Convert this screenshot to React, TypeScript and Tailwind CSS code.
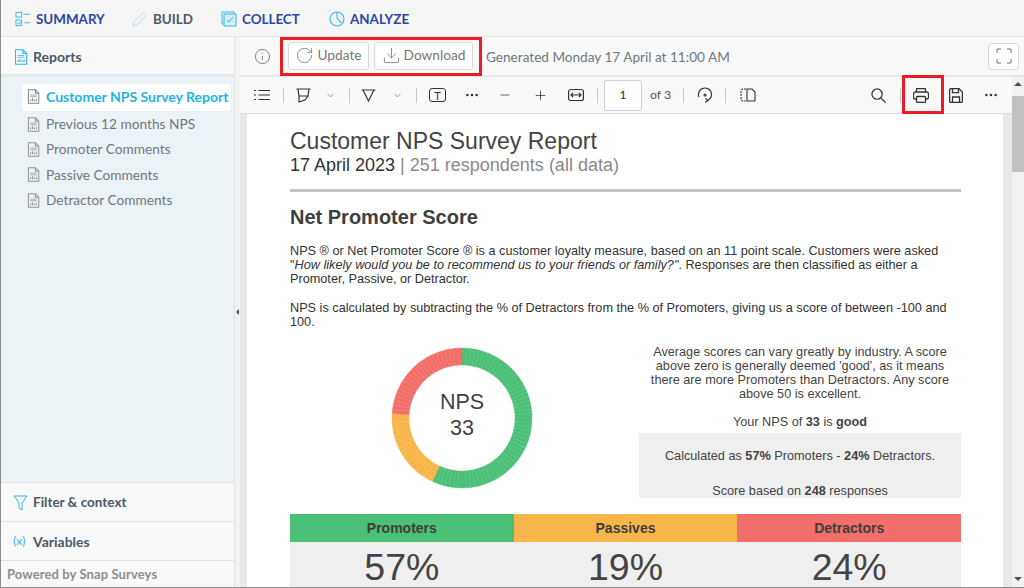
import { ReactNode } from 'react';
import { ChevronDown, Download, Info, Minus, MoreHorizontal, Plus, RotateCw } from 'lucide-react';

const ui = "font-['Lato','Noto_Sans',sans-serif]";
const doc = "font-['Liberation_Sans',Arial,sans-serif]";

function ReportIcon({ className }: { className: string }) {
  return (
    <svg viewBox="0 0 14 16" className={className} fill="none" stroke="currentColor" strokeWidth="1.1">
      <path d="M1.5.8h7.5l3.7 3.7v10.7H1.500z" />
      <path d="M9 .8v3.700h3.700" />
      <path d="M3.500 6.500h7M3.500 8.300h7" strokeWidth="0.8" />
      <path d="M4 13v-2M6 13v-3M8 13v-1.500M10 13v-2.500" strokeWidth="1.200" />
    </svg>
  );
}

function NavItem({ icon, label, dark, className }: { icon: ReactNode; label: string; dark?: boolean; className: string }) {
  return (
    <div className={`flex items-center gap-[5px] ${className}`}>
      {icon}
      <span className={`text-[13.4px] font-bold ${dark ? 'text-[#4b5a68]' : 'text-[#2b47a8]'}`}>{label}</span>
    </div>
  );
}

function ToolSep({ className = '' }: { className?: string }) {
  return <div className={`w-px h-[15px] bg-[#c8c8c8] ${className}`} />;
}

function Donut() {
  const cx = 72;
  const cy = 72;
  const r1 = 70;
  const r2 = 53;
  const segments = [];
  for (let i = 0; i < 100; i++) {
    const a = (i * 3.6 * Math.PI) / 180;
    const b = ((i + 1) * 3.6 * Math.PI) / 180;
    const color = i < 57 ? '#4bc076' : i < 76 ? '#f7b54a' : '#f26e68';
    const d = [
      `M${cx + r1 * Math.sin(a)} ${cy - r1 * Math.cos(a)}`,
      `L${cx + r1 * Math.sin(b)} ${cy - r1 * Math.cos(b)}`,
      `L${cx + r2 * Math.sin(b)} ${cy - r2 * Math.cos(b)}`,
      `L${cx + r2 * Math.sin(a)} ${cy - r2 * Math.cos(a)}`,
      'Z',
    ].join(' ');
    segments.push(
      <g key={i}>
        <path d={d} fill={color} stroke={color} strokeWidth="0.4" />
        <path
          d={`M${cx + r1 * Math.sin(a)} ${cy - r1 * Math.cos(a)}L${cx + r2 * Math.sin(a)} ${cy - r2 * Math.cos(a)}`}
          stroke="#ffffff"
          strokeOpacity="0.1"
          strokeWidth="0.5"
        />
      </g>,
    );
  }
  return (
    <div className="relative w-[144px] h-[144px]">
      <svg viewBox="0 0 144 144" className="w-[144px] h-[144px]">
        {segments}
      </svg>
      <div className="absolute inset-0 flex flex-col items-center justify-center pb-[7px] text-[21.5px] leading-[26px] text-[#3f4347]">
        <span>NPS</span>
        <span>33</span>
      </div>
    </div>
  );
}

function Report() {
  return (
    <div className={`${doc} w-[756px] h-full bg-white pl-[43px] pr-[42px] pt-[14px] text-[#444444] overflow-hidden`}>
      <h1 className="text-[23px] leading-[27px] text-[#444444]">Customer NPS Survey Report</h1>
      <p className="text-[18px] leading-[20px] text-[#333333]">
        17 April 2023 <span className="text-[#8a8a8a]">| 251 respondents (all data)</span>
      </p>
      <div className="h-[3px] bg-[#c4c4c4] mt-[14px]" />
      <h2 className="text-[20px] leading-[24px] font-bold mt-[13px] text-[#3f3f3f]">Net Promoter Score</h2>
      <p className="text-[12.7px] leading-[14px] mt-[15px] text-[#333333]">
        NPS ® or Net Promoter Score ® is a customer loyalty measure, based on an 11 point scale. Customers were asked
        "<i>How likely would you be to recommend us to your friends or family?"</i>. Responses are then classified as
        either a Promoter, Passive, or Detractor.
      </p>
      <p className="text-[12.7px] leading-[14px] mt-[15px] text-[#333333]">
        NPS is calculated by subtracting the % of Detractors from the % of Promoters, giving us a score of between -100
        and 100.
      </p>
      <div className="flex mt-[11px]">
        <div className="w-[349px] flex justify-center pr-[5px] pt-[6px]">
          <Donut />
        </div>
        <div className="w-[322px] text-center text-[12.7px] leading-[14px] text-[#444444] pt-[5px]">
          <p className="px-[10px]">
            Average scores can vary greatly by industry. A score above zero is generally deemed 'good', as it means
            there are more Promoters than Detractors. Any score above 50 is excellent.
          </p>
          <p className="mt-[14px]">
            Your NPS of <b>33</b> is <b>good</b>
          </p>
          <div className="bg-[#efefef] mt-[4px] h-[65px] pt-[16px]">
            <p>
              Calculated as <b>57%</b> Promoters - <b>24%</b> Detractors.
            </p>
            <p className="mt-[21px]">
              Score based on <b>248</b> responses
            </p>
          </div>
        </div>
      </div>
      <div className="mt-[16px]">
        <div className="grid grid-cols-3 h-[27px] text-[14px] leading-[28px] font-bold text-center text-[#3f3f3f]">
          <div className="bg-[#4bc076]">Promoters</div>
          <div className="bg-[#f7b54a]">Passives</div>
          <div className="bg-[#f26e68]">Detractors</div>
        </div>
        <div className="grid grid-cols-3 bg-[#efefef] text-center text-[37.5px] leading-[52px] h-[60px] text-[#444444]">
          <div>57%</div>
          <div>19%</div>
          <div>24%</div>
        </div>
      </div>
    </div>
  );
}

export default function App() {
  const items = ['Previous 12 months NPS', 'Promoter Comments', 'Passive Comments', 'Detractor Comments'];
  return (
    <div className={`${ui} relative w-[1024px] h-[588px] overflow-hidden bg-[#f5f5f5] border-l border-b border-[#8c8c8c] flex flex-col`}>
      {/* Top nav */}
      <div className="h-[37px] shrink-0 flex items-center pl-[14px] pt-[2px] border-b border-[#e6e6e6]">
        <NavItem
          className="w-[117px]"
          label="SUMMARY"
          icon={
            <svg viewBox="0 0 17 16" className="w-[16px] h-[16px] text-[#35b5e8]" fill="none" stroke="currentColor" strokeWidth="1">
              <path d="M1 1h6v5H1zM1 9h6v6H1zM9 3h7M10 12h6" />
              <path d="M2.500 12l1.500 1.500 2.500-3" />
            </svg>
          }
        />
        <NavItem
          dark
          className="w-[89px]"
          label="BUILD"
          icon={
            <svg viewBox="0 0 16 16" className="w-[16px] h-[16px] text-[#a8dff5]" fill="none" stroke="currentColor" strokeWidth="1">
              <path d="M1 15l1-4L11.500 1.500l3 3L5 14z" />
            </svg>
          }
        />
        <NavItem
          className="w-[108px]"
          label="COLLECT"
          icon={
            <svg viewBox="0 0 16 16" className="w-[16px] h-[16px] text-[#35b5e8]" fill="none" stroke="currentColor" strokeWidth="1">
              <path d="M3 13H1V1h12v2" />
              <path d="M3 3h12v12H3z" fill="#d5effa" />
              <path d="M6 9l2 2 4-5" />
            </svg>
          }
        />
        <NavItem
          className="w-[90px]"
          label="ANALYZE"
          icon={
            <svg viewBox="0 0 16 16" className="w-[16px] h-[16px] text-[#35b5e8]" fill="none" stroke="currentColor" strokeWidth="1.100">
              <circle cx="8" cy="8" r="7" />
              <path d="M8 1v6l4 5" />
            </svg>
          }
        />
      </div>

      <div className="flex flex-1 min-h-0">
        {/* Sidebar */}
        <aside className="w-[234px] shrink-0 flex flex-col border-r border-[#dfe3e6]">
          <div className="h-[40px] shrink-0 flex items-center pl-[13px] pt-[2px] gap-[5px] bg-[#f9f9f9] border-b-[3px] border-[#e3e8ec]">
            <ReportIcon className="w-[14px] h-[16px] text-[#35b5e8]" />
            <span className="text-[14px] font-bold text-[#4b5a68]">Reports</span>
          </div>
          <div className="flex-1 bg-[#ecf3f7] pt-[7px] pl-[21px] pr-[3px]">
            <div className="h-[27px] flex items-center pl-[5px] pb-[3px] gap-[6px] bg-white rounded-[3px]">
              <ReportIcon className="w-[13px] h-[15px] text-[#7f8589]" />
              <span className="text-[14px] font-bold text-[#25b3e6] whitespace-nowrap">Customer NPS Survey Report</span>
            </div>
            {items.map((item) => (
              <div key={item} className="h-[25.4px] flex items-center pl-[5px] pt-[1px] gap-[6px]">
                <ReportIcon className="w-[13px] h-[15px] text-[#8f9599]" />
                <span className="text-[13.7px] text-[#6f7880] whitespace-nowrap">{item}</span>
              </div>
            ))}
          </div>
          <div className="h-[39px] shrink-0 flex items-center pl-[12px] pt-[1px] gap-[5px] bg-[#f9f9f9] border-t border-[#dde2e6]">
            <svg viewBox="0 0 15 16" className="w-[15px] h-[16px] text-[#35b5e8]" fill="none" stroke="currentColor" strokeWidth="1">
              <path d="M1 1h13L9 8v7l-3-2V8z" />
            </svg>
            <span className="text-[13.5px] font-bold text-[#4b5a68]">Filter &amp; context</span>
          </div>
          <div className="h-[39px] shrink-0 flex items-center pl-[12px] gap-[5px] bg-[#f9f9f9] border-t border-[#dde2e6]">
            <span className="w-[15px] text-[12px] text-[#35b5e8] whitespace-nowrap">(x)</span>
            <span className="text-[14px] font-bold text-[#4b5a68]">Variables</span>
          </div>
          <div className="h-[27px] shrink-0 flex items-center pl-[6px] pt-[1px] bg-[#f9f9f9] border-t border-[#dde2e6]">
            <span className="text-[13px] tracking-[0.1px] font-bold text-[#8e8e8e] whitespace-nowrap">Powered by Snap Surveys</span>
          </div>
        </aside>

        {/* Splitter */}
        <div className="w-[5px] shrink-0 bg-[#f2f2f2] flex items-center justify-center">
          <div className="w-0 h-0 border-y-[3px] border-y-transparent border-r-[3px] border-r-[#555555]" />
        </div>

        {/* Main */}
        <main className="flex-1 min-w-0 flex flex-col">
          <div className="h-[40px] shrink-0 flex items-center bg-[#f9f9f9] border-b-[2px] border-[#e3e6ea] pl-[14px] pr-[5px]">
            <Info className="w-[17px] h-[17px] text-[#707070] mr-[17px]" strokeWidth={1.25} />
            <button className="h-[28px] w-[81px] flex items-center justify-center gap-[3px] pb-[2px] bg-white border border-[#d7d7d7] rounded-[3px] text-[13.7px] text-[#777777] mr-[5px]">
              <RotateCw className="w-[19px] h-[19px] text-[#707070]" strokeWidth={1} />
              Update
            </button>
            <button className="h-[28px] w-[99px] flex items-center justify-center gap-[3px] pb-[2px] bg-white border border-[#d7d7d7] rounded-[3px] text-[13.7px] text-[#777777] mr-[13px]">
              <Download className="w-[19px] h-[19px] text-[#707070]" strokeWidth={1} />
              Download
            </button>
            <span className="text-[13.6px] text-[#6f7880] whitespace-nowrap mt-[3px]">Generated Monday 17 April at 11:00 AM</span>
            <button className="ml-auto w-[31px] h-[27px] flex items-center justify-center bg-white border border-[#d7d7d7] rounded-[4px]">
              <svg viewBox="0 0 16 16" className="w-[16px] h-[16px] text-[#777777]" fill="none" stroke="currentColor" strokeWidth="1">
                <path d="M1 5V1h4M11 1h4v4M1 11v4h4M11 15h4v-4" />
              </svg>
            </button>
          </div>

          <div className="flex flex-1 min-h-0 bg-[#e8e8e8]">
            <div className="flex-1 min-w-0 flex flex-col">
              <div className="h-[37px] shrink-0 flex items-center bg-[#f9f9f9] border-b border-[#dcdcdc] text-[#333333] pl-[14px]">
                <svg viewBox="0 0 16 12" className="w-[16px] h-[12px]" fill="none" stroke="currentColor" strokeWidth="1.200">
                  <path d="M0 1.500h2M4.500 1.500H16M0 6h2M4.500 6H16M0 10.500h2M4.500 10.500H16" />
                </svg>
                <ToolSep className="ml-[13px]" />
                <svg viewBox="0 0 15 16" className="w-[15px] h-[16px] ml-[12px]" fill="none" stroke="currentColor" strokeWidth="1.200">
                  <path d="M0.500 2h14M2 2l1 7h9l1-7M3 9v6l6-2 3-4" />
                </svg>
                <ChevronDown className="w-[11px] h-[11px] ml-[14px] mr-[13px] text-[#555555]" strokeWidth={1.25} />
                <ToolSep />
                <svg viewBox="0 0 15 16" className="w-[15px] h-[16px] ml-[11px]" fill="none" stroke="currentColor" strokeWidth="1.200">
                  <path d="M0.500 3h14M2 3l5.500 11L13 3" />
                </svg>
                <ChevronDown className="w-[11px] h-[11px] ml-[16px] mr-[13px] text-[#555555]" strokeWidth={1.25} />
                <ToolSep />
                <div className="w-[17px] h-[14px] ml-[12px] border border-[#333333] rounded-[3px] flex items-center justify-center text-[11px] leading-none">T</div>
                <MoreHorizontal className="w-[16px] h-[16px] ml-[18px]" strokeWidth={1.75} />
                <Minus className="w-[14px] h-[14px] ml-[18px]" strokeWidth={1.25} />
                <Plus className="w-[15px] h-[15px] ml-[21px]" strokeWidth={1.25} />
                <svg viewBox="0 0 16 14" className="w-[16px] h-[14px] ml-[20px]" fill="none" stroke="currentColor" strokeWidth="1.200">
                  <rect x="0.600" y="1.500" width="14.800" height="11" rx="2" />
                  <path d="M3 7h10M5 5L3 7l2 2M11 5l2 2-2 2" />
                </svg>
                <ToolSep className="ml-[13px]" />
                <div className="w-[38px] h-[31px] ml-[6px] border border-[#cfcfcf] rounded-[2px] flex items-center justify-center text-[12px] bg-white">1</div>
                <span className="text-[12.3px] text-[#555555] ml-[8px]">of 3</span>
                <ToolSep className="ml-[12px]" />
                <svg viewBox="0 0 16 16" className="w-[16px] h-[16px] ml-[13px]" fill="none" stroke="currentColor" strokeWidth="1.200">
                  <path d="M2 10A6.500 6.500 0 1 1 14 10a6.500 6.500 0 0 1-3 3.500" />
                  <path d="M8.500 11.500l2.500 2.200-2.800 1.500" />
                  <circle cx="8" cy="8" r="1" />
                </svg>
                <ToolSep className="ml-[12px]" />
                <svg viewBox="0 0 16 14" className="w-[16px] h-[14px] ml-[14px]" fill="none" stroke="currentColor" strokeWidth="1.100">
                  <path d="M6 1H2.500L1 2.500v9L2.500 13H6" strokeDasharray="2 1" />
                  <path d="M7 1h5l3 3v9H7z" />
                </svg>
                <svg viewBox="0 0 16 16" className="w-[15px] h-[15px] ml-[115px]" fill="none" stroke="currentColor" strokeWidth="1.300">
                  <circle cx="6.500" cy="6.500" r="5.500" />
                  <path d="M10.500 10.500L15.500 15.500" />
                </svg>
                <ToolSep className="ml-[14px]" />
                <svg viewBox="0 0 16 15" className="w-[16px] h-[15px] ml-[12px]" fill="none" stroke="currentColor" strokeWidth="1.300">
                  <path d="M3.500 4V1.500a1 1 0 0 1 1-1h7a1 1 0 0 1 1 1V4" />
                  <path d="M3.500 11H2a1.500 1.500 0 0 1-1.500-1.500V6A2 2 0 0 1 2.500 4h11a2 2 0 0 1 2 2v3.500A1.500 1.500 0 0 1 14 11h-1.500" />
                  <rect x="3.500" y="8.500" width="9" height="6" rx="1" />
                </svg>
                <svg viewBox="0 0 14 15" className="w-[14px] h-[15px] ml-[20px]" fill="none" stroke="currentColor" strokeWidth="1.300">
                  <path d="M2 .6h8l3.400 3.400v9a1.500 1.500 0 0 1-1.500 1.500H2A1.500 1.500 0 0 1 .6 13V2A1.500 1.500 0 0 1 2 .6z" />
                  <path d="M3.500.6v4h6v-4M3.500 14.500V9h7v5.500" />
                </svg>
                <MoreHorizontal className="w-[16px] h-[16px] ml-[20px]" strokeWidth={1.75} />
              </div>
              <div className="flex-1 min-h-0 pl-[7px] pr-[5px]">
                <Report />
              </div>
            </div>

            {/* Scrollbar */}
            <div className="w-[12px] shrink-0 bg-[#f1f1f1] flex flex-col items-center">
              <div className="h-[19px] pt-[5px]">
                <div className="w-0 h-0 border-x-[4px] border-x-transparent border-b-[4px] border-b-[#505050]" />
              </div>
              <div className="w-full h-[76px] bg-[#c1c1c1]" />
              <div className="mt-auto h-[16px] flex items-center">
                <div className="w-0 h-0 border-x-[4px] border-x-transparent border-t-[4px] border-t-[#505050]" />
              </div>
            </div>
          </div>
        </main>
      </div>

      {/* Red annotations over the screenshot */}
      <div className="absolute left-[279px] top-[37px] w-[202px] h-[39px] border-[3px] border-[#ed1c24]" />
      <div className="absolute left-[901px] top-[75px] w-[42px] h-[39px] border-[3px] border-[#ed1c24]" />
    </div>
  );
}
